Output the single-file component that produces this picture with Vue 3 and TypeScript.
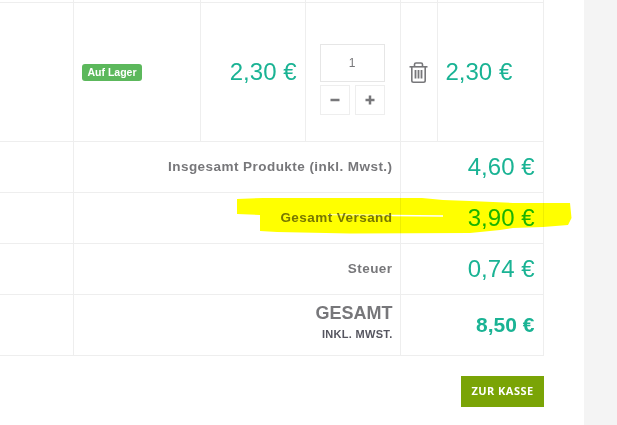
<script setup lang="ts">
const totals = [
  { label: "Insgesamt Produkte (inkl. Mwst.)", value: "4,60 €" },
  { label: "Gesamt Versand", value: "3,90 €" },
  { label: "Steuer", value: "0,74 €" },
];
</script>

<template>
  <div class="page">
    <main class="main">
      <table class="cart">
        <colgroup>
          <col class="c-a" />
          <col class="c-b" />
          <col class="c-c" />
          <col class="c-d" />
          <col class="c-e" />
          <col class="c-f" />
        </colgroup>
        <tbody>
          <tr class="stub">
            <td></td><td></td><td></td><td></td><td></td><td></td>
          </tr>
          <tr class="item">
            <td></td>
            <td><span class="stock">Auf Lager</span></td>
            <td class="price">2,30 €</td>
            <td>
              <div class="qty">
                <div class="qty-input">1</div>
                <div class="qty-btns">
                  <button class="qty-btn">
                    <svg width="10" height="10" viewBox="0 0 10 10"><rect x="0.5" y="3.75" width="9" height="2.5" fill="#77777a" /></svg>
                  </button>
                  <button class="qty-btn">
                    <svg width="10" height="10" viewBox="0 0 10 10"><path d="M0.5 3.750h3.250v-3.250h2.500v3.250h3.250v2.500h-3.250v3.250h-2.500v-3.250h-3.250z" fill="#77777a" /></svg>
                  </button>
                </div>
              </div>
            </td>
            <td class="trash">
              <svg width="19" height="21" viewBox="0 0 19 21" fill="none" stroke="#77777a" stroke-width="1.6">
                <path d="M0.500 4.800h18" />
                <path d="M5.500 4.800V2.400Q5.500 1 7 1h5Q13.500 1 13.500 2.400v2.400" />
                <path d="M2.800 4.800v13.700q0 1.700 1.700 1.700h10q1.700 0 1.700-1.700V4.800" />
                <path d="M6.500 8v8.500M9.500 8v8.500M12.500 8v8.500" stroke-width="1.800" />
              </svg>
            </td>
            <td class="price left">2,30 €</td>
          </tr>
          <tr v-for="row in totals" :key="row.label" class="total">
            <td></td>
            <td colspan="3" class="label">{{ row.label }}</td>
            <td colspan="2" class="price">{{ row.value }}</td>
          </tr>
          <tr class="grand">
            <td></td>
            <td colspan="3" class="label">
              <div class="grand-title">GESAMT</div>
              <div class="grand-sub">INKL. MWST.</div>
            </td>
            <td colspan="2" class="price strong">8,50 €</td>
          </tr>
        </tbody>
      </table>
      <div class="actions">
        <button class="checkout">ZUR KASSE</button>
      </div>
    </main>
    <aside class="side"></aside>
    <!-- hand-drawn marker over the shipping row -->
    <svg class="marker" width="617" height="425" viewBox="0 0 617 425">
      <path
        d="M237 199L263 198L422 198L443 200L470 201L513 203L570 203L571.500 218L568 225L543 227L513 228L500 230L470 233L350 233.500L277 232L260 231L260 215L237 214Z"
        fill="#ffff00"
      />
      <path d="M328 214.700L392 215.200" stroke="#fff" stroke-width="0.800" fill="none" />
      <path d="M392 215.500L443 216" stroke="#fff" stroke-width="1.500" fill="none" />
    </svg>
  </div>
</template>

<style scoped>
.page {
  position: relative;
  display: flex;
  width: 617px;
  height: 425px;
  overflow: hidden;
  background: #fff;
  font-family: "Liberation Sans", Arial, sans-serif;
}

.main {
  width: 584px;
  flex: none;
}

.side {
  flex: 1;
  background: #f4f4f4;
}

.cart {
  table-layout: fixed;
  width: 543px;
  border-collapse: collapse;
}

.c-a { width: 73px; }
.c-b { width: 127px; }
.c-c { width: 105px; }
.c-d { width: 95px; }
.c-e { width: 37px; }
.c-f { width: 106px; }

td {
  padding: 0;
  border: 1px solid #eee;
  vertical-align: middle;
}

td:first-child {
  border-left: 0;
}

.stub td {
  height: 2px;
  border-top: 0;
}

.item td {
  height: 138px;
}

.total td {
  height: 50px;
}

.grand td {
  height: 60px;
}

.stock {
  display: inline-block;
  margin-left: 8px;
  padding: 2px 5px 3px 6px;
  border-radius: 3px;
  background: #5cb85c;
  color: #fff;
  font-size: 10.500px;
  font-weight: 700;
  line-height: 12px;
  vertical-align: middle;
}

.price {
  padding-right: 8px;
  color: #1ab394;
  font-size: 24px;
  text-align: right;
}

.price.left {
  padding-right: 0;
  padding-left: 8px;
  text-align: left;
}

.price.strong {
  font-size: 21px;
  font-weight: 700;
}

.qty {
  width: 65px;
  margin-top: 14px;
  margin-left: 14px;
}

.qty-input {
  height: 36px;
  border: 1px solid #e6e6e6;
  color: #77777a;
  font-size: 12px;
  line-height: 36px;
  text-align: center;
}

.qty-btns {
  display: flex;
  justify-content: space-between;
  margin-top: 3px;
}

.qty-btn {
  display: flex;
  align-items: center;
  justify-content: center;
  width: 30px;
  height: 30px;
  padding: 0;
  border: 1px solid #eee;
  background: #fff;
}

.trash svg {
  display: block;
  margin: 0 auto;
}

.label {
  padding-right: 7px;
  padding-bottom: 2px;
  color: #77777a;
  font-size: 13.500px;
  font-weight: 700;
  letter-spacing: 0.450px;
  text-align: right;
}

.total .label {
  height: 48px;
}

.grand .label {
  height: 58px;
}

.grand-title {
  margin-top: -5px;
  font-size: 18px;
  line-height: 22px;
  letter-spacing: 0;
}

.grand-sub {
  margin-top: 4px;
  color: #55555f;
  font-size: 11px;
  line-height: 13px;
  letter-spacing: 0.300px;
}

.actions {
  display: flex;
  justify-content: flex-end;
  width: 544px;
  margin-top: 20px;
}

.checkout {
  width: 83px;
  height: 31px;
  padding: 0 0 2px;
  border: 0;
  background: #7aa406;
  color: #fff;
  font-family: "Open Sans", sans-serif;
  font-size: 11px;
  font-weight: 700;
  letter-spacing: 0.450px;
}

.marker {
  position: absolute;
  top: 0;
  left: 0;
  mix-blend-mode: multiply;
  pointer-events: none;
}
</style>
